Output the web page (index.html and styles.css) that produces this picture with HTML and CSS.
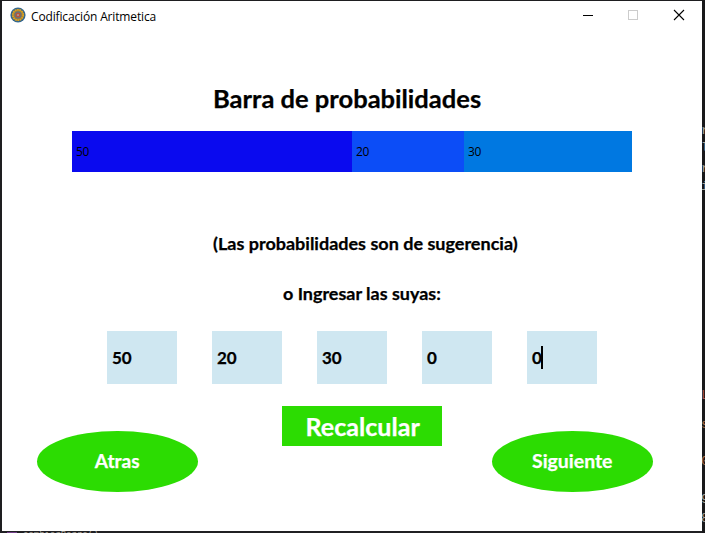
FILE: index.html
```html
<!DOCTYPE html>
<html lang="es">
<head>
<meta charset="utf-8">
<title>Codificación Aritmetica</title>
<link rel="stylesheet" href="styles.css">
</head>
<body>
<div class="behind behind-right" aria-hidden="true">
  <span class="s1">r</span><span class="s2">l</span><span class="s3">r</span><span class="s4">i</span>
  <span class="s5 red">L</span><span class="s6 orange">s</span><span class="s7 orange">0</span><span class="s8">9</span><span class="s9">8</span>
</div>
<div class="behind behind-bottom" aria-hidden="true"><i></i><span>cambiarBarra()</span></div>
<main class="window">
  <header class="titlebar">
    <svg class="app-icon" width="16" height="16" viewBox="0 0 16 16">
      <circle cx="8" cy="8" r="7.6" fill="#35678d"/>
      <circle cx="8" cy="8" r="5.8" fill="#9c7c40"/>
      <circle cx="8" cy="8" r="5.2" fill="none" stroke="#e0a51c" stroke-width="1.8" stroke-dasharray="1.6 .7"/>
      <circle cx="8" cy="8" r="3.4" fill="#587786"/>
      <circle cx="8" cy="8" r="2.5" fill="#b8543c"/>
      <circle cx="8" cy="8" r="1" fill="#a8a097"/>
    </svg>
    <span class="caption">Codificación Aritmetica</span>
    <svg class="controls" width="138" height="30" viewBox="0 0 138 30" fill="none">
      <path d="M19 14.5h10" stroke="#000"/>
      <rect x="64.500" y="9.500" width="9" height="9" stroke="#ccc"/>
      <path d="M110 9l10 10M120 9l-10 10" stroke="#000" stroke-width="1.100"/>
    </svg>
  </header>
  <h1><span class="t t-title">Barra de probabilidades</span></h1>
  <div class="bar">
    <div class="seg seg-a">50</div><div class="seg seg-b">20</div><div class="seg seg-c">30</div>
  </div>
  <p class="hint"><span class="t t-hint">(Las probabilidades son de sugerencia)</span></p>
  <p class="own"><span class="t t-own">o Ingresar las suyas:</span></p>
  <div class="fields">
    <div class="field"><span class="t">50</span></div>
    <div class="field"><span class="t">20</span></div>
    <div class="field"><span class="t">30</span></div>
    <div class="field"><span class="t">0</span></div>
    <div class="field"><span class="t">0</span><i class="caret"></i></div>
  </div>
  <div class="actions">
    <div class="oval"><span class="t t-back">Atras</span></div>
    <div class="recalc"><span class="t t-recalc">Recalcular</span></div>
    <div class="oval"><span class="t t-next">Siguiente</span></div>
  </div>
</main>
</body>
</html>
```
FILE: styles.css
```css
* { box-sizing: border-box; }
body { margin: 0; width: 705px; height: 533px; padding: 1px 0 0 2px; overflow: hidden; position: relative; background: #1e1e20; }
.window { position: relative; width: 700px; height: 530px; background: #fff; color: #000; font-family: Lato, sans-serif; font-weight: 700; }
.titlebar { display: flex; height: 30px; align-items: center; padding-left: 8px; }
.app-icon { margin-top: -2px; }
.caption { flex: 1; margin: 0 0 0 5px; font: 12px "Open Sans", sans-serif; letter-spacing: -.15px; white-space: nowrap; }
h1, p { margin: 0; }
.t { display: inline-block; white-space: nowrap; transform-origin: 0 50%; -webkit-text-stroke: .25px currentColor; }
.t-title { transform: scaleX(1.063); }
.t-hint { transform: scaleX(1.059); }
.t-own { transform: scaleX(1.055); }
.t-back { transform: scaleX(1.06); }
.t-next { transform: scaleX(1.08); }
.t-recalc { transform: scaleX(1.045); }
h1 { height: 100px; padding: 52px 0 0 211px; font-size: 24px; line-height: 32px; }
.bar { display: flex; width: 560px; height: 41px; margin-left: 70px; }
.seg { padding-left: 4px; font: 12px/42px "Open Sans", sans-serif; letter-spacing: -.3px; }
.seg-a { width: 50%; background: #0a0aef; }
.seg-b { width: 20%; background: #0c4df7; }
.seg-c { width: 30%; background: #0078e1; }
.hint { padding: 61px 0 0 211px; font-size: 17px; line-height: 22px; }
.own { padding: 28px 0 0 281px; font-size: 17px; line-height: 22px; }
.fields { display: flex; gap: 35px; margin: 26px 0 0 105px; }
.field { position: relative; width: 70px; height: 53px; padding-left: 5px; background: #cfe7f1; font-size: 17px; line-height: 53px; }
.caret { position: absolute; left: 14px; top: 15px; width: 2px; height: 23px; background: #000; }
.actions { display: flex; align-items: flex-start; margin: 22px 0 0 35px; color: #fff; }
.oval { display: flex; justify-content: center; width: 161px; height: 61px; margin-top: 25px; border-radius: 50%; background: #2cdc02; font-size: 18px; line-height: 60px; }
.recalc { width: 160px; height: 40px; margin: 0 50px 0 84px; text-align: center; background: #2cdc02; font-size: 24px; line-height: 42px; }
.oval .t, .recalc .t { transform-origin: 50% 50%; }
.recalc .t { margin-left: 1px; }
.behind { position: absolute; overflow: hidden; font: 13px/16px "Liberation Mono", monospace; color: #aaa59b; }
.behind-right { left: 702px; top: 0; width: 3px; height: 533px; background: #18181a; }
.behind-right span { position: absolute; left: -1px; }
.s1 { top: 123px; } .s2 { top: 140px; } .s3 { top: 161px; } .s4 { top: 179px; }
.s5 { top: 388px; } .s6 { top: 417px; } .s7 { top: 454px; } .s8 { top: 492px; } .s9 { top: 511px; }
.red { color: #a65353; } .orange { color: #b67346; }
.behind-bottom { left: 0; top: 531px; width: 702px; height: 2px; background: #202023; }
.behind-bottom i { position: absolute; left: 7px; top: 1px; width: 10px; height: 1px; background: #713e88; }
.behind-bottom span { position: absolute; left: 23px; top: -1px; font-size: 9px; line-height: 10px; }
```
